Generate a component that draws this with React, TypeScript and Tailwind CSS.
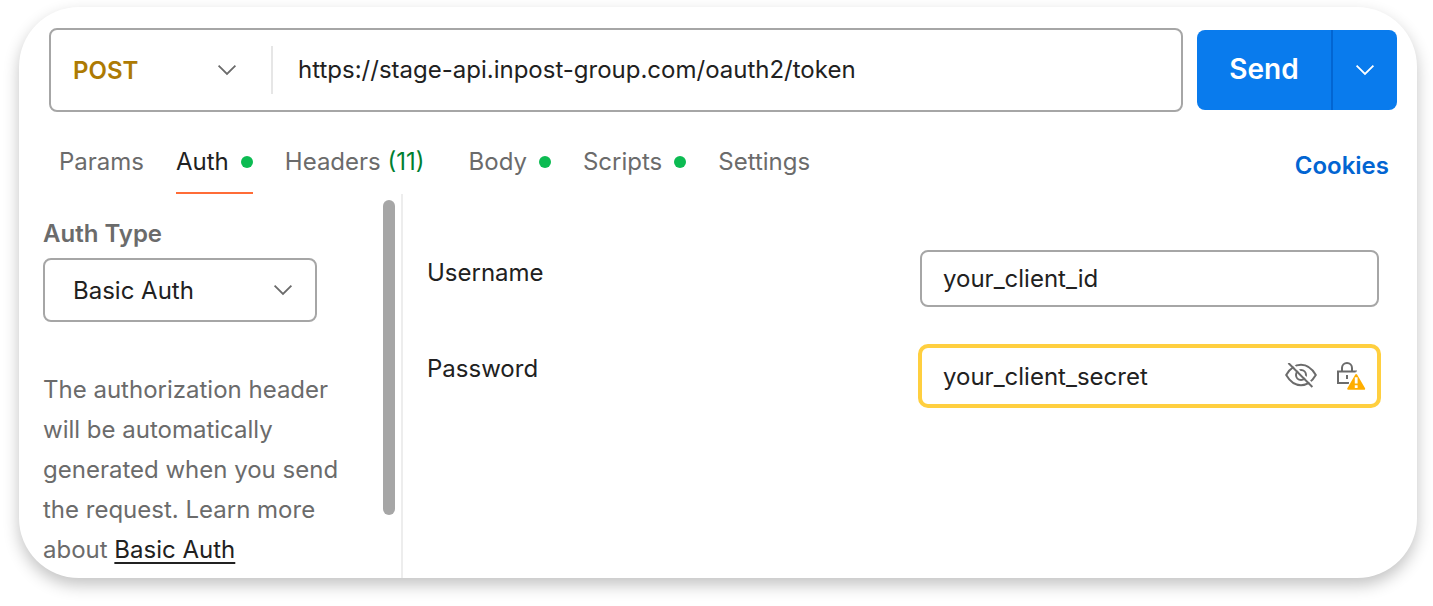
import React from "react";

const tabs = [
  { name: "Params" },
  { name: "Auth", dot: true, active: true },
  { name: "Headers", count: 11 },
  { name: "Body", dot: true },
  { name: "Scripts", dot: true },
  { name: "Settings" },
];

const Chevron = ({ className }: { className?: string }) => (
  <svg viewBox="0 0 20 12" fill="none" stroke="currentColor" strokeWidth="1.8" className={className}>
    <path d="M1.6 1.6 10 10l8.4-8.4" />
  </svg>
);

const EyeOff = () => (
  <svg viewBox="0 1 32 26" fill="none" stroke="#6b6b6b" strokeWidth="2" className="w-8 h-[26px]">
    <path d="M1.2 13C4.5 7.3 9.7 2.8 16 2.8S27.5 7.3 30.8 13C27.500 18.700 22.300 23.200 16 23.200S4.500 18.700 1.200 13Z" />
    <circle cx="16" cy="13" r="5" />
    <path d="M4.9 -0.3 29 23.8" stroke="#fff" strokeWidth="2" />
    <path d="M3.4 1 27.4 25" />
  </svg>
);

const LockWarning = () => (
  <svg viewBox="0 0 30 30" fill="none" stroke="#6b6b6b" strokeWidth="2" className="w-[30px] h-[30px]">
    <path d="M12 22H1V10.500H19V15M5 10.500V7a5 5 0 0 1 10 0V10.500M10 14v4" />
    <path d="M19.200 14 27.200 27.800H11.200Z" fill="#fff" stroke="#fff" strokeWidth="4" />
    <path d="M19.200 14 27.200 27.800H11.200Z" fill="#ffae00" stroke="#ffae00" strokeLinejoin="round" />
    <path d="M19.200 16.200v6.200M19.200 24.200v2.800" stroke="#fff" strokeWidth="2.800" />
  </svg>
);

const App = () => {
  return (
    <div className="bg-white min-h-screen pt-[7px] pb-7 pl-[19px] pr-4 font-['Inter',sans-serif] text-2xl text-[#212121]">
      <div className="bg-white rounded-[60px] overflow-hidden shadow-[0_7px_16px_rgba(0,0,0,0.24)]">
        <div className="flex items-center gap-[14px] pt-[21px] pl-[30px] pr-5">
          <div className="flex flex-1 items-center h-[84px] border-2 border-[#a6a6a6] rounded-lg">
            <div className="relative w-[222px] shrink-0">
              <select
                aria-label="Method"
                className="appearance-none w-full h-12 pt-0.5 pl-[22px] font-semibold text-[#ad7a03] border-r-2 border-[#e6e6e6]"
              >
                <option>POST</option>
              </select>
              <Chevron className="absolute right-9 top-[18px] w-5 h-3 text-[#6b6b6b] pointer-events-none" />
            </div>
            <input
              aria-label="Request URL"
              defaultValue="https://stage-api.inpost-group.com/oauth2/token"
              className="flex-1 min-w-0 h-12 pb-0.5 px-[25px] outline-none"
            />
          </div>
          <div className="flex h-20 rounded-lg overflow-hidden bg-[#097bed] text-white">
            <button className="w-[134px] text-[28px] font-semibold">Send</button>
            <button aria-label="Send options" className="flex items-center justify-center w-[66px] border-l-2 border-[#0265d2]">
              <Chevron className="w-5 h-3" />
            </button>
          </div>
        </div>

        <div className="flex items-center justify-between pt-[18px] pl-10 pr-7">
          <div role="tablist" className="flex gap-8">
            {tabs.map((tab) => (
              <button
                key={tab.name}
                role="tab"
                aria-selected={!!tab.active}
                className={`flex items-center gap-3 h-16 pt-0.5 border-b-2 ${
                  tab.active ? "text-[#212121] border-[#ff6c37]" : "text-[#6b6b6b] border-transparent"
                }`}
              >
                <span>
                  {tab.name}
                  {tab.count && <span className="mr-3 text-[#007f31]"> ({tab.count})</span>}
                </span>
                {tab.dot && <span className="w-3 h-3 rounded-full bg-[#0cbb52]" />}
              </button>
            ))}
          </div>
          <a href="#" className="pt-2 font-semibold text-[#0265d2]">
            Cookies
          </a>
        </div>

        <div className="flex">
          <div className="flex justify-between w-[384px] shrink-0 pl-6 pr-[6px] border-r-2 border-[#ededed]">
            <div className="w-[310px] pt-5 pb-2">
              <label htmlFor="auth-type" className="block h-10 leading-10 font-semibold text-[#6b6b6b]">
                Auth Type
              </label>
              <div className="relative w-[274px] mt-1">
                <select
                  id="auth-type"
                  className="appearance-none w-full h-16 pt-0.5 pl-7 border-2 border-[#a6a6a6] rounded-lg"
                >
                  <option>Basic Auth</option>
                </select>
                <Chevron className="absolute right-6 top-[26px] w-5 h-3 text-[#6b6b6b] pointer-events-none" />
              </div>
              <p className="mt-12 leading-10 text-[#6b6b6b]">
                The authorization header will be automatically generated when you send the request. Learn more about{" "}
                <a href="#" className="text-[#212121] underline decoration-2 underline-offset-4">
                  Basic Auth
                </a>
              </p>
            </div>
            <div className="w-3 h-[315px] mt-[6px] rounded-full bg-[#a6a6a6]" />
          </div>

          <div className="flex-1 pl-6 pr-9 pt-14">
            <div className="flex justify-between">
              <label htmlFor="username" className="pt-[7px]">
                Username
              </label>
              <input
                id="username"
                defaultValue="your_client_id"
                className="w-[459px] h-[57px] mr-[2px] px-[21px] border-2 border-[#a6a6a6] rounded-lg outline-none"
              />
            </div>
            <div className="flex justify-between mt-[37px]">
              <label htmlFor="password" className="pt-[9px]">
                Password
              </label>
              <div className="flex items-center w-[463px] h-16 pl-[21px] pr-[10px] border-4 border-[#ffcf3f] rounded-[10px]">
                <input
                  id="password"
                  defaultValue="your_client_secret"
                  className="flex-1 min-w-0 pt-0.5 outline-none"
                />
                <button aria-label="Toggle password" className="mr-5">
                  <EyeOff />
                </button>
                <LockWarning />
              </div>
            </div>
          </div>
        </div>
      </div>
    </div>
  );
};

export default App;
